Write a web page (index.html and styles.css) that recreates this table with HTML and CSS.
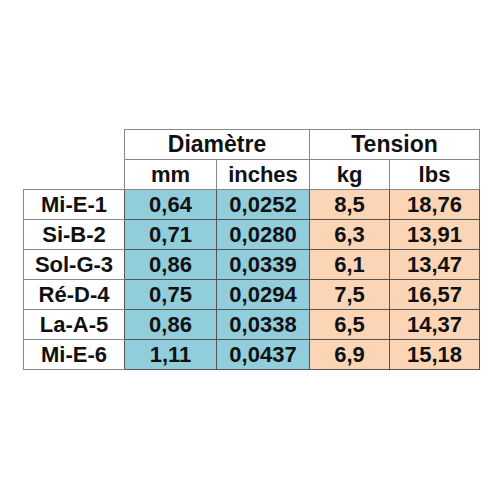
FILE: index.html
```
<!DOCTYPE html>
<html lang="fr">
<head>
    <meta charset="UTF-8">
    <meta name="viewport" content="width=device-width, initial-scale=1.0">
    <title>Cordes</title>
    <link rel="stylesheet" href="styles.css">
</head>
<body>

    <table class="strings">
        <colgroup>
            <col class="c-label">
            <col class="c-mm">
            <col class="c-in">
            <col class="c-kg">
            <col class="c-lbs">
        </colgroup>
        <thead>
            <tr>
                <th class="blank"></th>
                <th colspan="2">Diamètre</th>
                <th colspan="2">Tension</th>
            </tr>
            <tr>
                <th class="blank"></th>
                <th>mm</th>
                <th>inches</th>
                <th>kg</th>
                <th>lbs</th>
            </tr>
        </thead>
        <tbody>
            <tr><th>Mi-E-1</th><td class="dia">0,64</td><td class="dia">0,0252</td><td class="ten">8,5</td><td class="ten">18,76</td></tr>
            <tr><th>Si-B-2</th><td class="dia">0,71</td><td class="dia">0,0280</td><td class="ten">6,3</td><td class="ten">13,91</td></tr>
            <tr><th>Sol-G-3</th><td class="dia">0,86</td><td class="dia">0,0339</td><td class="ten">6,1</td><td class="ten">13,47</td></tr>
            <tr><th>Ré-D-4</th><td class="dia">0,75</td><td class="dia">0,0294</td><td class="ten">7,5</td><td class="ten">16,57</td></tr>
            <tr><th>La-A-5</th><td class="dia">0,86</td><td class="dia">0,0338</td><td class="ten">6,5</td><td class="ten">14,37</td></tr>
            <tr><th>Mi-E-6</th><td class="dia">1,11</td><td class="dia">0,0437</td><td class="ten">6,9</td><td class="ten">15,18</td></tr>
        </tbody>
    </table>

</body>
</html>
```

FILE: styles.css
```
body {
    margin: 0;
    padding: 129px 0 0 23px;
    background-color: #fff;
    font-family: "Liberation Sans", Arial, sans-serif;
}

.strings {
    border-collapse: collapse;
    table-layout: fixed;
    width: 456px;
    color: #111;
    font-size: 22px;
    font-weight: bold;
}

.c-label { width: 101px; }
.c-mm { width: 92px; }
.c-in { width: 93px; }
.c-kg { width: 80px; }
.c-lbs { width: 90px; }

.strings th,
.strings td {
    height: 29px;
    padding: 0;
    line-height: 29px;
    text-align: center;
    border: 1px solid #555;
    font-weight: bold;
}

.strings thead th {
    border-color: #888;
}

.strings thead th.blank {
    border: none;
    border-right: 1px solid #888;
}

.strings thead tr:first-child th {
    font-size: 23px;
}

.strings tbody th {
    border-color: #888;
    border-right-color: #555;
}

.dia {
    background-color: #92cddc;
}

.ten {
    background-color: #fbd5b5;
}
```
